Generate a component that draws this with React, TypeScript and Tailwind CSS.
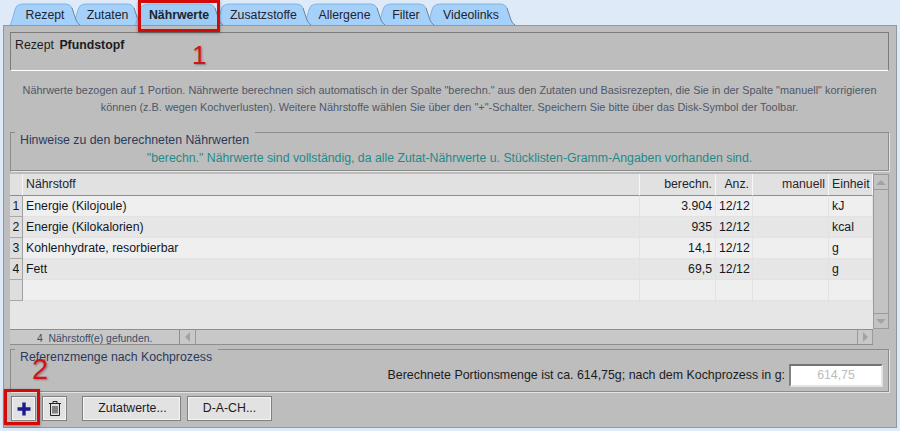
const tabs = [
  { t: "Rezept", w: 63 },
  { t: "Zutaten", w: 62 },
  { t: "Nährwerte", w: 81, active: true },
  { t: "Zusatzstoffe", w: 88 },
  { t: "Allergene", w: 74 },
  { t: "Filter", w: 49 },
  { t: "Videolinks", w: 81 },
];

const rows = [
  ["1", "Energie (Kilojoule)", "3.904", "12/12", "", "kJ"],
  ["2", "Energie (Kilokalorien)", "935", "12/12", "", "kcal"],
  ["3", "Kohlenhydrate, resorbierbar", "14,1", "12/12", "", "g"],
  ["4", "Fett", "69,5", "12/12", "", "g"],
  ["", "", "", "", "", ""],
];

const gridCols = "grid grid-cols-[13px_617px_76px_37px_76px_44px]";

function Tab({ t, w, active, z }: { t: string; w: number; active?: boolean; z: number }) {
  return (
    <div className="relative h-[22px] shrink-0" style={{ width: w, zIndex: z }}>
      <svg className="absolute left-[-6px] top-0" width={w + 14} height="22" viewBox={`0 0 ${w + 14} 22`}>
        <path
          d={`M2 22 C5 18 6 6 9 3 Q11 1 15 1 L${w - 5} 1 Q${w - 1} 1 ${w + 1} 5 L${w + 5} 17 Q${w + 6} 20 ${w + 9} 22 Z`}
          fill={active ? "#9ccbf5" : "#a5d0fa"}
          stroke="none"
        />
        <path d={`M2 22 C5 18 6 6 9 3 Q11 1 15 1 L${w - 5} 1 Q${w - 1} 1 ${w + 1} 5`} fill="none" stroke="#7fb5e0" strokeWidth="1" />
        <path d={`M${w + 1} 5 L${w + 5} 17 Q${w + 6} 20 ${w + 9} 22`} fill="none" stroke="#6b8599" strokeWidth="1" />
      </svg>
      <div className={`relative flex h-full items-center justify-center pr-[1px] pt-[2px] text-[12.3px] text-[#20242e] ${active ? "font-bold" : ""}`}>
        {t}
      </div>
    </div>
  );
}

function HCell({ children, right }: { children?: React.ReactNode; right?: boolean }) {
  return (
    <div className={`flex h-[22px] items-center border-b border-r border-b-[#8e8e8e] border-r-[#f6f6f6] bg-[#e1e1e1] px-[3px] text-[12.3px] text-[#1f2430] ${right ? "justify-end" : ""}`}>
      {children}
    </div>
  );
}

function Cell({ children, right }: { children?: React.ReactNode; right?: boolean }) {
  return (
    <div className={`flex h-[21px] items-center overflow-hidden whitespace-nowrap border-b border-r border-[#e2e2e2] px-[3px] text-[12.3px] text-[#15171c] ${right ? "justify-end" : ""}`}>
      {children}
    </div>
  );
}

function Arrow({ dir }: { dir: "up" | "down" | "left" | "right" }) {
  const pts = { up: "0,6 5,1 10,6", down: "0,1 10,1 5,6", left: "6,0 6,10 1,5", right: "1,0 1,10 6,5" }[dir];
  return (
    <svg width={dir === "up" || dir === "down" ? 10 : 7} height={dir === "up" || dir === "down" ? 7 : 10}>
      <polygon points={pts} fill="#a3a3a3" />
    </svg>
  );
}

export default function App() {
  return (
    <div className="relative h-[431px] w-[900px] overflow-hidden bg-[#dfeaf8] font-['Liberation_Sans',sans-serif]">
      <div className="flex h-[25px] items-end pl-[14px]">
        {tabs.map((x, i) => (
          <Tab key={x.t} {...x} z={x.active ? 20 : 10 - i} />
        ))}
      </div>

      <div className="mx-[3px] flex h-[403px] flex-col border border-[#8f98a3] bg-[#bdbdbd] pl-[6px] pr-[7px] pt-[6px]">
        <div className="h-[39px] shrink-0 border border-[#7b7b7b] border-b-white pl-[4px] pt-[3px] text-[12.3px] text-[#1a1c22]">
          Rezept <span className="ml-[2px] font-bold">Pfundstopf</span>
        </div>

        <p className="mt-[11px] shrink-0 text-center text-[10.9px] leading-[17px] text-[#4f5868]">
          Nährwerte bezogen auf 1 Portion. Nährwerte berechnen sich automatisch in der Spalte "berechn." aus den Zutaten und Basisrezepten, die Sie in der Spalte "manuell" korrigieren
          <br />
          können (z.B. wegen Kochverlusten). Weitere Nährstoffe wählen Sie über den "+"-Schalter. Speichern Sie bitte über das Disk-Symbol der Toolbar.
        </p>

        <div className="relative mt-[16px] h-[39px] shrink-0 border border-[#8c8c8c] pt-[18px] shadow-[1px_1px_0_#e4e4e4]">
          <div className="absolute left-[4px] top-[-1px] h-[16px] w-[240px] bg-[#bdbdbd] pl-[5px] text-[12.3px] leading-[16px] text-[#2c3a5c]">
            Hinweise zu den berechneten Nährwerten
          </div>
          <div className="text-center text-[12.3px] leading-[14px] text-[#1f8a8a]">
            "berechn." Nährwerte sind vollständig, da alle Zutat-Nährwerte u. Stücklisten-Gramm-Angaben vorhanden sind.
          </div>
        </div>

        <div className="mt-[3px] flex h-[171px] shrink-0">
          <div className="flex w-[863px] flex-col">
            <div className="flex h-[155px] flex-col bg-[#e6e6e6]">
              <div className={gridCols}>
                <HCell />
                <HCell>Nährstoff</HCell>
                <HCell right>berechn.</HCell>
                <HCell right>Anz.</HCell>
                <HCell right><span className="text-[#3a1f1f]">manuell</span></HCell>
                <HCell>Einheit</HCell>
              </div>
              {rows.map((r, i) => (
                <div key={i} className={`${gridCols} ${i % 2 === 0 ? "bg-[#efefef]" : "bg-[#e6e6e6]"}`}>
                  <div className="flex h-[21px] items-center justify-center border-b border-r border-b-[#a8a8a8] border-r-[#a0a0a0] bg-[#dedede] text-[12.3px] text-[#15171c]">{r[0]}</div>
                  <Cell>{r[1]}</Cell>
                  <Cell right>{r[2]}</Cell>
                  <Cell>{r[3]}</Cell>
                  <Cell right>{r[4]}</Cell>
                  <Cell>{r[5]}</Cell>
                </div>
              ))}
            </div>
            <div className="flex h-[16px] border-y border-[#8e8e8e] bg-[#c8c8c8]">
              <div className="flex w-[170px] items-center border-r border-[#8e8e8e] pl-[27px] pt-[3px] text-[10.4px] text-[#3c4a66]">
                4&nbsp; Nährstoff(e) gefunden.
              </div>
              <div className="flex w-[16px] items-center justify-center border-r border-[#9a9a9a]">
                <Arrow dir="left" />
              </div>
              <div className="flex-1" />
              <div className="flex w-[16px] items-center justify-center border-l border-r border-[#9a9a9a]">
                <Arrow dir="right" />
              </div>
            </div>
          </div>
          <div className="flex h-[155px] w-[17px] flex-col justify-between border border-[#9a9a9a] bg-[#c3c3c3]">
            <div className="flex h-[15px] items-center justify-center border-b border-[#9a9a9a]">
              <Arrow dir="up" />
            </div>
            <div className="flex h-[15px] items-center justify-center border-t border-[#9a9a9a]">
              <Arrow dir="down" />
            </div>
          </div>
        </div>

        <div className="relative mt-[4px] h-[43px] shrink-0 border border-[#8c8c8c] pr-[5px] pt-[14px] shadow-[1px_1px_0_#e4e4e4]">
          <div className="absolute left-[4px] top-[-1px] h-[16px] w-[203px] bg-[#bdbdbd] pl-[5px] text-[12.3px] leading-[16px] text-[#2c3a5c]">
            Referenzmenge nach Kochprozess
          </div>
          <div className="flex items-center justify-end gap-[4px]">
            <span className="text-[12.4px] text-[#1a1c22]">Berechnete Portionsmenge ist ca. 614,75g; nach dem Kochprozess in g:</span>
            <div className="flex h-[23px] w-[94px] items-center justify-center border-2 border-b-[#e4e4e4] border-l-[#808080] border-r-[#e4e4e4] border-t-[#737373] bg-white text-[12.3px] text-[#bcbcbc]">
              614,75
            </div>
          </div>
        </div>

        <div className="mt-[4px] flex shrink-0 items-start pl-[1px]">
          <div className="flex h-[25px] w-[25px] items-center justify-center border border-[#808080] bg-[#e2e2e2] shadow-[inset_0_0_0_1px_#f4f4f4]">
            <svg width="16" height="16" viewBox="0 0 16 16">
              <path d="M8 1.5v13M1.5 8h13" stroke="#1c1c8e" strokeWidth="3.4" />
            </svg>
          </div>
          <div className="ml-[6px] flex h-[25px] w-[25px] items-center justify-center border border-[#808080] bg-[#e2e2e2] shadow-[inset_0_0_0_1px_#f4f4f4]">
            <svg width="14" height="17" viewBox="0 0 14 17" fill="none" stroke="#222" strokeWidth="1">
              <path d="M1 3.5h12M5 3V1.5h4V3M2.5 4v11.5h9V4M5 6v7.5M7 6v7.5M9 6v7.5" />
            </svg>
          </div>
          <div className="ml-[15px] flex h-[25px] w-[99px] items-center justify-center border border-[#808080] bg-[#e2e2e2] pl-[2px] text-[12.3px] text-[#1a1c22] shadow-[inset_0_0_0_1px_#f4f4f4]">
            Zutatwerte...
          </div>
          <div className="ml-[6px] flex h-[25px] w-[85px] items-center justify-center border border-[#808080] bg-[#e2e2e2] text-[12.3px] text-[#1a1c22] shadow-[inset_0_0_0_1px_#f4f4f4]">
            D-A-CH...
          </div>
        </div>
      </div>

      {/* annotations */}
      <div className="absolute left-[138px] top-0 z-30 h-[32px] w-[82px] border-[3px] border-[#d20a0a] shadow-[0_1px_3px_rgba(0,0,0,0.35)]" />
      <div className="absolute left-[4px] top-[389px] h-[36px] w-[36px] border-[3px] border-[#d20a0a] shadow-[0_1px_3px_rgba(0,0,0,0.35)]" />
      <div className="absolute left-[192px] top-[40px] text-[26px] leading-[30px] text-[#d41414] [text-shadow:1px_1px_2px_rgba(0,0,0,0.35)]">1</div>
      <div className="absolute left-[32px] top-[354px] text-[29px] leading-[30px] text-[#d41414] [text-shadow:1px_1px_2px_rgba(0,0,0,0.35)]">2</div>
    </div>
  );
}
